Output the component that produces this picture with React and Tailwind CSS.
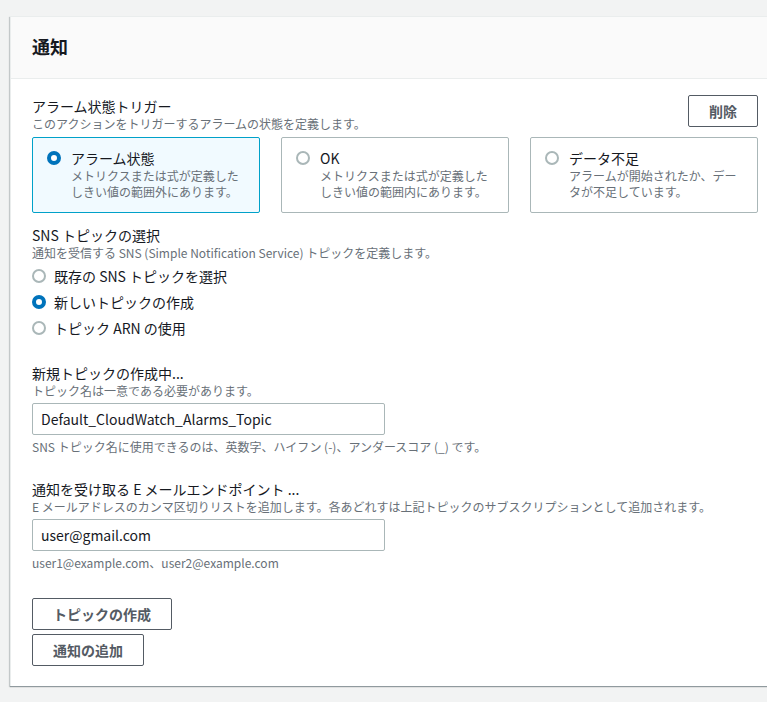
import React from "react";

const font = { fontFamily: '"Noto Sans CJK JP", "Noto Sans", sans-serif' };

function Radio({ checked }) {
  return checked ? (
    <span className="inline-block w-[14px] h-[14px] rounded-full border-[4px] border-[#0073bb] bg-white shrink-0" />
  ) : (
    <span className="inline-block w-[14px] h-[14px] rounded-full border-[2px] border-[#aab7b8] bg-white shrink-0" />
  );
}

function Tile({ checked, label, lines }) {
  return (
    <div
      className={`h-[76px] rounded-[2px] border pl-[14px] pr-3 pt-[10px] ${
        checked ? "border-[#00a1c9] bg-[#f1faff]" : "border-[#aab7b8] bg-white"
      }`}
    >
      <div className="flex items-start">
        <div className="h-5 flex items-center">
          <Radio checked={checked} />
        </div>
        <div className="ml-[10px]">
          <div className="text-[14px] leading-5 text-[#16191f]">{label}</div>
          {lines.map((l, i) => (
            <div key={i} className="text-[12px] leading-4 text-[#687078]">
              {l}
            </div>
          ))}
        </div>
      </div>
    </div>
  );
}

function RadioRow({ checked, label }) {
  return (
    <div className="flex items-center h-[22px]">
      <Radio checked={checked} />
      <span className="ml-2 text-[14px] text-[#16191f]">{label}</span>
    </div>
  );
}

function Btn({ children }) {
  return (
    <button className="h-8 px-5 rounded-[2px] border border-[#545b64] bg-white text-[14px] font-bold text-[#545b64] leading-none">
      {children}
    </button>
  );
}

export default function App() {
  return (
    <div className="w-[767px] h-[702px] overflow-hidden bg-[#f2f3f3]" style={font}>
      <div className="pl-[10px] pt-4">
        <div className="w-[768px] bg-white border-l border-t border-[#eaeded] shadow-[0_1px_1px_0_rgba(0,28,36,0.3),-1px_1px_1px_0_rgba(0,28,36,0.15)]">
          <div className="bg-[#fafafa] border-b border-[#eaeded] pl-[21px] pt-[18px] pb-[21px]">
            <h2 className="text-[18px] leading-[22px] font-bold text-[#16191f]">通知</h2>
          </div>
          <div className="pl-[21px] pr-[20px] pt-4 pb-5">
            <div className="flex justify-between items-start">
              <div className="mt-[1px]">
                <div className="text-[14px] leading-5 text-[#16191f]">アラーム状態トリガー</div>
                <div className="text-[12px] leading-4 text-[#687078]">
                  このアクションをトリガーするアラームの状態を定義します。
                </div>
              </div>
              <Btn>削除</Btn>
            </div>
            <div className="grid grid-cols-3 gap-[21px] mt-[5px]">
              <Tile
                checked
                label="アラーム状態"
                lines={["メトリクスまたは式が定義した", "しきい値の範囲外にあります。"]}
              />
              <Tile
                label="OK"
                lines={["メトリクスまたは式が定義した", "しきい値の範囲内にあります。"]}
              />
              <Tile
                label="データ不足"
                lines={["アラームが開始されたか、デー", "タが不足しています。"]}
              />
            </div>

            <div className="mt-3">
              <div className="text-[14px] leading-5 text-[#16191f]">SNS トピックの選択</div>
              <div className="text-[12px] leading-4 text-[#687078]">
                通知を受信する SNS (Simple Notification Service) トピックを定義します。
              </div>
              <div className="flex flex-col gap-1 mt-1">
                <RadioRow label="既存の SNS トピックを選択" />
                <RadioRow checked label="新しいトピックの作成" />
                <RadioRow label="トピック ARN の使用" />
              </div>
            </div>

            <div className="mt-6">
              <div className="text-[14px] leading-5 text-[#16191f]">新規トピックの作成中...</div>
              <div className="text-[12px] leading-4 text-[#687078]">
                トピック名は一意である必要があります。
              </div>
              <div className="mt-1 w-[353px] h-8 border border-[#aab7b8] rounded-[2px] px-2 flex items-center text-[14px] text-[#16191f]">
                Default_CloudWatch_Alarms_Topic
              </div>
              <div className="mt-1 text-[12px] leading-4 text-[#687078]">
                SNS トピック名に使用できるのは、英数字、ハイフン (-)、アンダースコア (_) です。
              </div>
            </div>

            <div className="mt-6">
              <div className="text-[14px] leading-5 text-[#16191f]">
                通知を受け取る E メールエンドポイント ...
              </div>
              <div className="text-[12px] leading-4 text-[#687078]">
                E メールアドレスのカンマ区切りリストを追加します。各あどれすは上記トピックのサブスクリプションとして追加されます。
              </div>
              <div className="mt-1 w-[353px] h-8 border border-[#aab7b8] rounded-[2px] px-2 flex items-center text-[14px] text-[#16191f]">
                user@gmail.com
              </div>
              <div className="mt-1 text-[12px] leading-4 text-[#687078]">
                user1@example.com、user2@example.com
              </div>
            </div>

            <div className="mt-[27px] flex flex-col items-start gap-1">
              <Btn>トピックの作成</Btn>
              <Btn>通知の追加</Btn>
            </div>
          </div>
        </div>
      </div>
    </div>
  );
}
